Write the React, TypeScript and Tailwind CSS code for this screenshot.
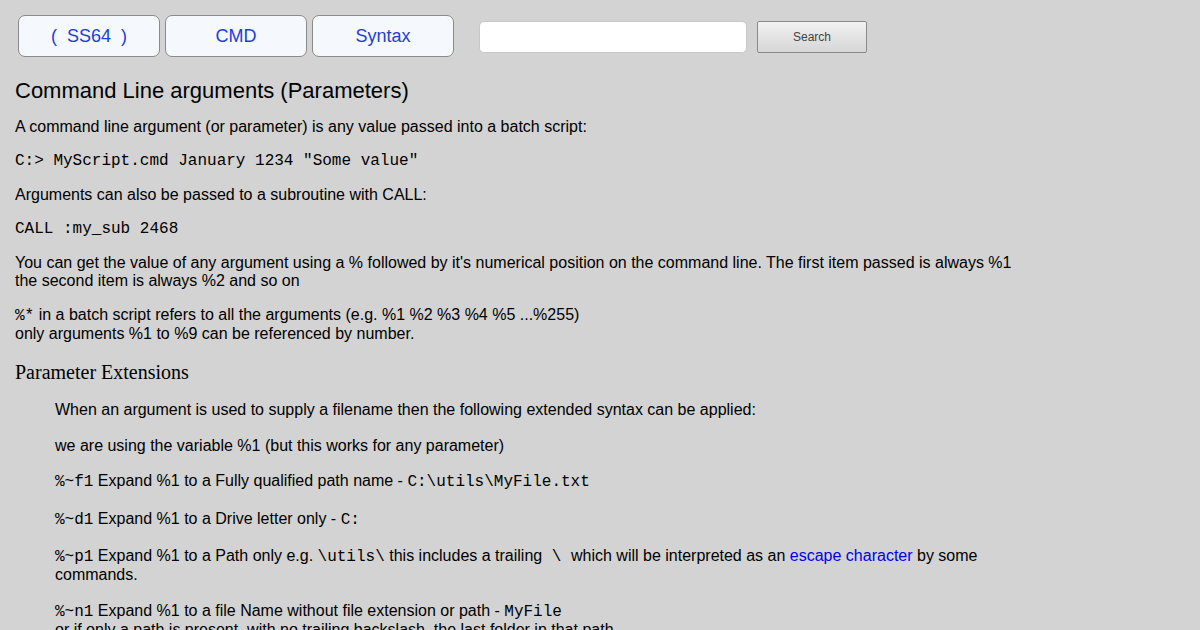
import React from "react";

const sans = "font-['Liberation_Sans',Arial,sans-serif]";
const mono = "font-['Liberation_Mono','Courier_New',monospace]";

const NavButton = ({ label }: { label: string }) => (
  <a
    href="#"
    className="flex items-center justify-center w-[142px] h-[42px] rounded-[7px] border border-[#8a8a8a] bg-[#f5f8fc] text-[18px] text-[#1c3fd8] whitespace-pre"
  >
    {label}
  </a>
);

const Code = ({ children }: { children: React.ReactNode }) => (
  <code className={`${mono} text-[16px] whitespace-pre`}>{children}</code>
);

const App = () => {
  return (
    <div className={`${sans} bg-[#d3d3d3] w-full min-h-[630px] text-black text-[16px] leading-[18px] overflow-hidden`}>
      <div className="flex items-start pl-[18px] pt-[15px]">
        <div className="flex gap-[5px]">
          <NavButton label="(  SS64  )" />
          <NavButton label="CMD" />
          <NavButton label="Syntax" />
        </div>
        <input
          type="text"
          className="ml-[25px] mt-[6px] w-[268px] h-[32px] rounded-[5px] bg-white border border-[#c8c8c8]"
        />
        <button className="ml-[10px] mt-[6px] w-[110px] h-[32px] border border-[#8a8a8a] rounded-[2px] bg-gradient-to-b from-[#f2f2f2] to-[#d6d6d6] text-[12px] text-[#444]">
          Search
        </button>
      </div>

      <div className="px-[15px] max-w-[1030px]">
        <h1 className="text-[22px] leading-[26px] mt-[21px] mb-[14px]">
          Command Line arguments (Parameters)
        </h1>
        <p className="mb-4">A command line argument (or parameter) is any value passed into a batch script:</p>
        <p className={`${mono} mb-4`}>C:&gt; MyScript.cmd January 1234 "Some value"</p>
        <p className="mb-4">Arguments can also be passed to a subroutine with CALL:</p>
        <p className={`${mono} mb-4`}>CALL :my_sub 2468</p>
        <p className="mb-4">
          You can get the value of any argument using a % followed by it's numerical position on the command line. The first item passed is always %1 the second item is always %2 and so on
        </p>
        <p className="mb-[18px]">
          <Code>%*</Code> in a batch script refers to all the arguments (e.g. %1 %2 %3 %4 %5 ...%255)
          <br />
          only arguments %1 to %9 can be referenced by number.
        </p>
        <h2 className="font-['Liberation_Serif','Times_New_Roman',serif] text-[20px] leading-[23px] mb-[17px]">
          Parameter Extensions
        </h2>

        <div className="pl-10">
          <p className="mb-[18px]">When an argument is used to supply a filename then the following extended syntax can be applied:</p>
          <p className="mb-[17px]">we are using the variable %1 (but this works for any parameter)</p>
          <p className="mb-[19px]">
            <Code>%~f1</Code> Expand %1 to a Fully qualified path name - <Code>C:\utils\MyFile.txt</Code>
          </p>
          <p className="mb-[18px]">
            <Code>%~d1</Code> Expand %1 to a Drive letter only - <Code>C:</Code>
          </p>
          <p className="mb-[18px]">
            <Code>%~p1</Code> Expand %1 to a Path only e.g. <Code>\utils\</Code> this includes a trailing<Code> \ </Code>which will be interpreted as an{" "}
            <a href="#" className="text-[#0000ee]">escape character</a> by some commands.
          </p>
          <p className="mb-[18px]">
            <Code>%~n1</Code> Expand %1 to a file Name without file extension or path - <Code>MyFile</Code>
            <br />
            or if only a path is present, with no trailing backslash, the last folder in that path.
          </p>
        </div>
      </div>
    </div>
  );
};

export default App;
